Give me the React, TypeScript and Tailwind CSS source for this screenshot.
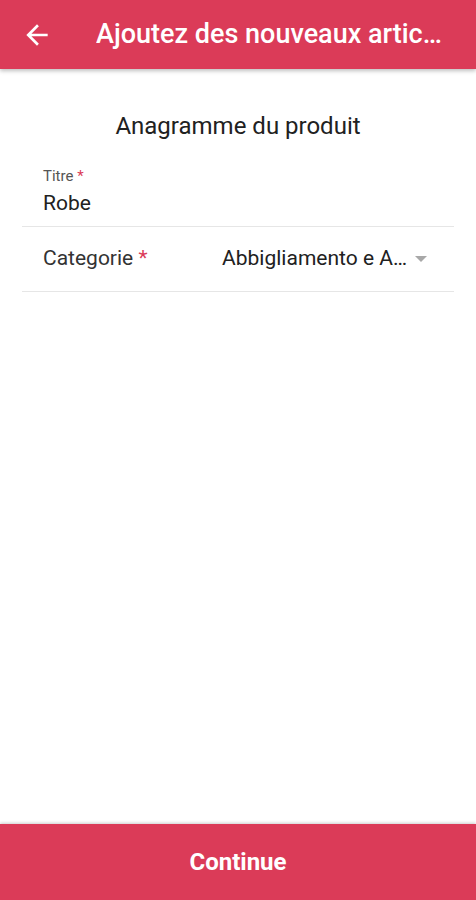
import React from "react";

export default function App() {
  return (
    <div className="relative flex h-[900px] w-[476px] flex-col bg-white font-['Roboto',sans-serif] text-[#212121]">
      {/* HEADER */}
      <header className="flex h-[69px] shrink-0 items-center bg-[#db3b58] shadow-[0_2px_4px_rgba(0,0,0,0.25)]">
        <button className="ml-[21px] flex h-8 w-8 items-center justify-center text-white">
          <svg width="32" height="32" viewBox="0 0 24 24" fill="currentColor">
            <path d="M20 11H7.83l5.59-5.59L12 4l-8 8 8 8 1.41-1.41L7.83 13H20v-2z" />
          </svg>
        </button>
        <h1 className="ml-[43px] truncate pr-4 text-[27px] font-medium text-white">
          Ajoutez des nouveaux artic…
        </h1>
      </header>

      {/* FORM */}
      <main className="flex flex-1 flex-col px-[22px] pt-[39px]">
        <h2 className="text-center text-[24px] leading-[36px] text-[#212121]">Anagramme du produit</h2>

        <div className="mt-[23px] border-b border-[#e6e6e6] px-[21px] pb-[10px]">
          <div className="text-[15px] leading-[18px] text-[#555]">
            Titre <span className="text-[#db3b58]">*</span>
          </div>
          <div className="mt-[5px] text-[21px] leading-[26px]">Robe</div>
        </div>

        <div className="flex h-[65px] items-center border-b border-[#e6e6e6] pl-[21px] pr-[26px]">
          <div className="text-[21px] text-[#333]">
            Categorie <span className="text-[#db3b58]">*</span>
          </div>
          <div className="ml-auto flex items-center">
            <span className="text-[21px] text-[#212121]">Abbigliamento e A…</span>
            <svg className="ml-[7px]" width="14" height="8" viewBox="0 0 14 8" fill="#a8a8a8">
              <path d="M1 1h12L7 7z" />
            </svg>
          </div>
        </div>
      </main>

      {/* CONTINUE */}
      <button className="flex h-[76px] shrink-0 items-center justify-center bg-[#db3b58] text-[24px] font-bold text-white shadow-[0_-1px_3px_rgba(0,0,0,0.2)]">
        Continue
      </button>
    </div>
  );
}
